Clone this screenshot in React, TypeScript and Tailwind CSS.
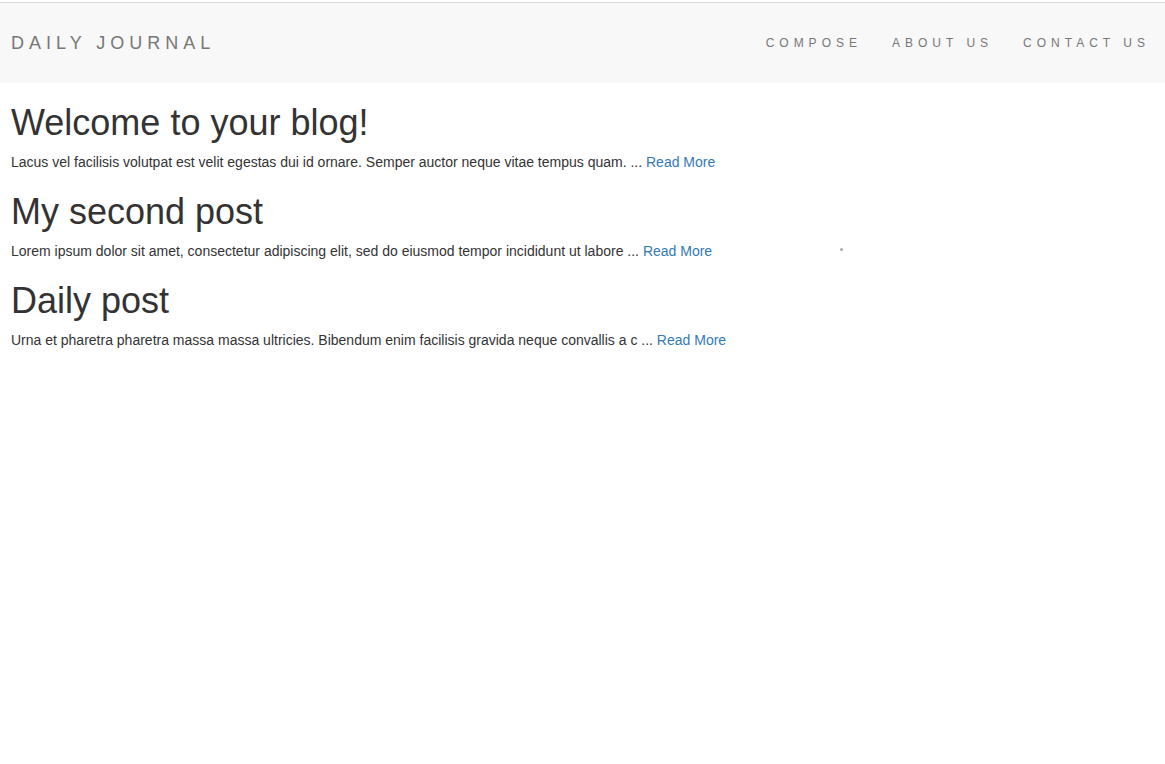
const posts = [
  {
    title: "Welcome to your blog!",
    excerpt:
      "Lacus vel facilisis volutpat est velit egestas dui id ornare. Semper auctor neque vitae tempus quam. ...",
  },
  {
    title: "My second post",
    excerpt:
      "Lorem ipsum dolor sit amet, consectetur adipiscing elit, sed do eiusmod tempor incididunt ut labore ...",
  },
  {
    title: "Daily post",
    excerpt:
      "Urna et pharetra pharetra massa massa ultricies. Bibendum enim facilisis gravida neque convallis a c ...",
  },
];

const navLinks = ["Compose", "About Us", "Contact Us"];

export default function App() {
  return (
    <div className="relative min-h-[764px] bg-white pt-[2px] font-['Liberation_Sans',Arial,sans-serif] text-[14px] leading-[20px] text-[#333]">
      {/* Navbar */}
      <nav className="mb-[20px] flex h-[81px] items-center justify-between border-t border-[#dcdcdc] bg-[#f8f8f8] pl-[11px]">
        <a href="#" className="text-[18px] uppercase tracking-[5px] text-[#777]">
          Daily Journal
        </a>
        <ul className="flex items-center">
          {navLinks.map((link) => (
            <li key={link}>
              <a href="#" className="block px-[15px] text-[12px] uppercase tracking-[5px] text-[#777]">
                {link}
              </a>
            </li>
          ))}
        </ul>
      </nav>

      {/* Posts */}
      <div className="px-[11px]">
        {posts.map((post) => (
          <div key={post.title}>
            <h1 className="mb-[10px] mt-[20px] text-[36px] font-normal leading-[39px] text-[#333]">
              {post.title}
            </h1>
            <p className="mb-[10px]">
              {post.excerpt}{" "}
              <a href="#" className="text-[#337ab7]">
                Read More
              </a>
            </p>
          </div>
        ))}
      </div>

      <span className="absolute left-[840px] top-[248px] h-[3px] w-[3px] rounded-full bg-[#aaa]" />
    </div>
  );
}
